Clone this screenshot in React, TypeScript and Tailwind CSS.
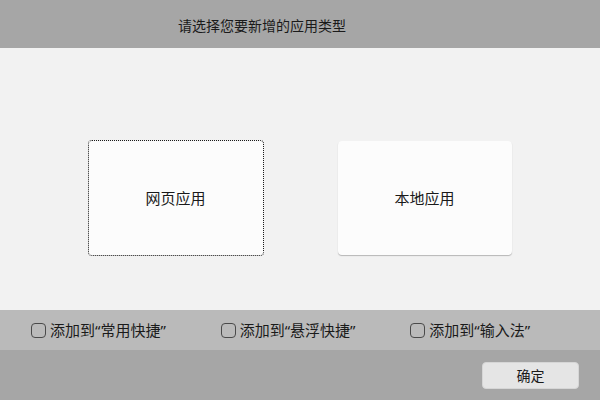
const font = { fontFamily: '"Noto Sans", "Noto Sans CJK SC", sans-serif' };

function Option({ label }: { label: string }) {
  return (
    <label className="flex w-[190px] items-center gap-[4px]">
      <span className="h-[15px] w-[15px] rounded-[4px] border-[1.5px] border-[#4a4a4a]" />
      <span className="text-[15px] leading-none text-[#1a1a1a]">{label}</span>
    </label>
  );
}

export default function App() {
  return (
    <div className="flex h-[400px] w-[600px] flex-col" style={font}>
      <div className="flex h-12 items-center bg-[#a6a6a6] pl-[178px] pt-[3px]">
        <span className="text-[14px] text-[#1a1a1a]">请选择您要新增的应用类型</span>
      </div>

      <div className="flex flex-1 justify-center gap-[75px] bg-[#f2f2f2] pt-[93px]">
        <div className="flex h-[114px] w-[174px] items-center justify-center rounded-[3px] bg-[#fcfcfc] outline-1 outline-dotted outline-[#1a1a1a]">
          <span className="text-[15px] text-[#1a1a1a]">网页应用</span>
        </div>
        <div className="flex h-[114px] w-[174px] items-center justify-center rounded-[4px] bg-[#fcfcfc] shadow-[0_1px_1px_rgba(0,0,0,0.25)]">
          <span className="text-[15px] text-[#1a1a1a]">本地应用</span>
        </div>
      </div>

      <div className="flex h-10 items-center bg-[#bababa] pl-[31px]">
        <Option label="添加到“常用快捷”" />
        <Option label="添加到“悬浮快捷”" />
        <Option label="添加到“输入法”" />
      </div>

      <div className="flex h-[50px] justify-end bg-[#a6a6a6] pr-[21px] pt-[12px]">
        <button className="h-[27px] w-[97px] rounded-[4px] border border-[#d6d6d6] bg-[#e5e5e5] text-[14px] text-[#1a1a1a]">
          确定
        </button>
      </div>
    </div>
  );
}
